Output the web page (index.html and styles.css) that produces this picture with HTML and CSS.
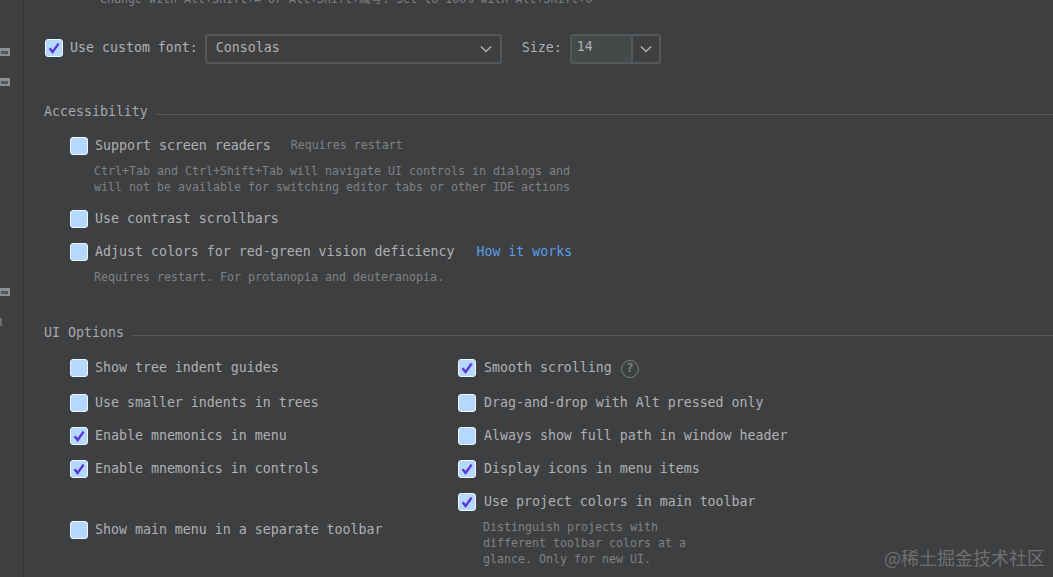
FILE: index.html
```html
<!DOCTYPE html>
<html lang="en">
<head>
<meta charset="utf-8">
<title>Appearance settings</title>
<link rel="stylesheet" href="styles.css">
</head>
<body>
<div class="page">
  <aside class="rail">
    <svg class="rail-icon first" viewBox="0 0 10 10"><path d="M0 1h10v8H0z" fill="#8c8f91"/><path d="M1 4h7v3H1z" fill="#55585a"/></svg>
    <svg class="rail-icon second" viewBox="0 0 10 10"><path d="M0 1h10v8H0z" fill="#8c8f91"/><path d="M1 4h7v3H1z" fill="#55585a"/></svg>
    <svg class="rail-icon third" viewBox="0 0 10 10"><path d="M0 1h10v8H0z" fill="#8c8f91"/><path d="M1 4h7v3H1z" fill="#55585a"/></svg>
    <span class="rail-mark"></span>
  </aside>
  <main class="content">
    <p class="top-hint">Change with Alt+Shift+= or Alt+Shift+减号. Set to 100% with Alt+Shift+0</p>

    <div class="font-row">
      <label class="check-row">
        <span class="box on"><svg viewBox="0 0 14 14"><path d="M2.6 7.2 5.6 11 11.6 2.6"/></svg></span>
        <span>Use custom font:</span>
      </label>
      <div class="combo font-combo"><span class="combo-text">Consolas</span><svg class="chev" viewBox="0 0 12 8"><path d="M1 1.5 6 6.5 11 1.5"/></svg></div>
      <span class="size-label">Size:</span>
      <div class="combo size-combo"><span class="size-value">14</span><span class="size-btn"><svg class="chev" viewBox="0 0 12 8"><path d="M1 1.5 6 6.5 11 1.5"/></svg></span></div>
    </div>

    <div class="heading access-heading"><span>Accessibility</span><i></i></div>
    <div class="group">
      <div class="check-row row-a1">
        <span class="box"></span><span>Support screen readers</span><span class="note restart">Requires restart</span>
      </div>
      <p class="note para-a1">Ctrl+Tab and Ctrl+Shift+Tab will navigate UI controls in dialogs and<br>will not be available for switching editor tabs or other IDE actions</p>
      <div class="check-row row-a2"><span class="box"></span><span>Use contrast scrollbars</span></div>
      <div class="check-row row-a3"><span class="box"></span><span>Adjust colors for red-green vision deficiency</span><a class="link">How it works</a></div>
      <p class="note para-a3">Requires restart. For protanopia and deuteranopia.</p>
    </div>

    <div class="heading ui-heading"><span>UI Options</span><i></i></div>
    <div class="options">
      <div class="col">
        <div class="check-row opt"><span class="box"></span><span>Show tree indent guides</span></div>
        <div class="check-row opt tight"><span class="box"></span><span>Use smaller indents in trees</span></div>
        <div class="check-row opt tight"><span class="box on"><svg viewBox="0 0 14 14"><path d="M2.6 7.2 5.6 11 11.6 2.6"/></svg></span><span>Enable mnemonics in menu</span></div>
        <div class="check-row opt tight"><span class="box on"><svg viewBox="0 0 14 14"><path d="M2.6 7.2 5.6 11 11.6 2.6"/></svg></span><span>Enable mnemonics in controls</span></div>
        <div class="check-row opt last"><span class="box"></span><span>Show main menu in a separate toolbar</span></div>
      </div>
      <div class="col right">
        <div class="check-row opt"><span class="box on"><svg viewBox="0 0 14 14"><path d="M2.6 7.2 5.6 11 11.6 2.6"/></svg></span><span>Smooth scrolling</span><span class="help">?</span></div>
        <div class="check-row opt tight"><span class="box"></span><span>Drag-and-drop with Alt pressed only</span></div>
        <div class="check-row opt tight"><span class="box"></span><span>Always show full path in window header</span></div>
        <div class="check-row opt tight"><span class="box on"><svg viewBox="0 0 14 14"><path d="M2.6 7.2 5.6 11 11.6 2.6"/></svg></span><span>Display icons in menu items</span></div>
        <div class="check-row opt tight"><span class="box on"><svg viewBox="0 0 14 14"><path d="M2.6 7.2 5.6 11 11.6 2.6"/></svg></span><span>Use project colors in main toolbar</span></div>
        <p class="note para-ui">Distinguish projects with<br>different toolbar colors at a<br>glance. Only for new UI.</p>
      </div>
    </div>
  </main>
</div>
<div class="watermark">@稀土掘金技术社区</div>
</body>
</html>
```
FILE: styles.css
```css
* { box-sizing: border-box; }
html, body { margin: 0; height: 100%; overflow: hidden; }
body {
  background: #3e3f41;
  color: #afb1b3;
  font-family: "DejaVu Sans Mono", "Noto Sans CJK SC", monospace;
  font-size: 13.28px;
}
.page { display: flex; height: 577px; overflow: hidden; }
.rail {
  width: 24px;
  flex: none;
  border-right: 1px solid #333537;
  display: flex;
  flex-direction: column;
  align-items: flex-start;
}
.rail-icon { display: block; width: 10px; height: 10px; }
.rail-icon.first { margin-top: 47px; }
.rail-icon.second { margin-top: 20px; }
.rail-icon.third { margin-top: 200px; }
.rail-mark { width: 2px; height: 8px; margin-top: 21px; background: #6a6c6e; }
.content { flex: 1; min-width: 0; }
p { margin: 0; }
.note { font-size: 11.63px; color: #7f8284; line-height: 16px; }
.top-hint {
  font-size: 11.63px;
  color: #7f8284;
  line-height: 16px;
  margin: -9px 0 0 76px;
  white-space: nowrap;
}
.font-row { display: flex; align-items: center; margin: 27px 0 0 21px; height: 30px; }
.check-row { display: flex; align-items: center; white-space: nowrap; }
.check-row > span:not(.box), .link { padding-bottom: 2px; }
.font-row .check-row > span:not(.box), .size-label, .combo-text { padding-bottom: 4px; }
.box {
  width: 18px;
  height: 18px;
  flex: none;
  margin-right: 7px;
  background: #b4d8fe;
  border: 1px solid #eef6ff;
  border-radius: 3px;
  display: flex;
  align-items: center;
  justify-content: center;
}
.font-row .box { margin-top: -2px; }
.box svg { width: 14px; height: 14px; }
.box path { fill: none; stroke: #5a36d8; stroke-width: 2.4; }
.combo {
  height: 30px;
  border: 2px solid #55585a;
  border-radius: 3px;
  display: flex;
  align-items: center;
}
.font-combo {
  width: 297px;
  margin-left: 7px;
  padding: 0 8px 0 9px;
  justify-content: space-between;
}
.chev { width: 12px; height: 8px; flex: none; }
.chev path { fill: none; stroke: #afb1b3; stroke-width: 1.4; }
.size-label { margin: 0 8px 0 20px; }
.size-combo { width: 91px; padding: 0; }
.size-value {
  width: 61px;
  height: 100%;
  padding: 0 5px 5px;
  display: flex;
  align-items: center;
  background: #45494a;
  border-right: 2px solid #55585a;
}
.size-btn { flex: 1; display: flex; justify-content: center; }
.heading { display: flex; align-items: center; margin-left: 20px; line-height: 16px; color: #a6a8aa; }
.heading i { flex: 1; height: 1px; background: #55585a; margin: 5px 0 0 8px; }
.access-heading { margin-top: 40px; }
.group { margin-left: 46px; }
.row-a1 { margin-top: 17px; height: 18px; }
.row-a1 .restart { margin-left: 20px; }
.para-a1 { margin: 8px 0 0 24px; }
.row-a2 { margin-top: 15px; height: 18px; }
.row-a3 { margin-top: 15px; height: 18px; }
.link { color: #5a9de8; margin-left: 22px; }
.para-a3 { margin: 8px 0 0 24px; }
.ui-heading { margin-top: 40px; }
.options { display: grid; grid-template-columns: 388px 1fr; margin: 18px 0 0 46px; }
.col { display: flex; flex-direction: column; align-items: flex-start; }
.opt { height: 18px; margin-bottom: 17px; }
.opt.tight { margin-bottom: 15px; }
.opt.last { margin-top: 28px; }
.right .box { margin-right: 8px; }
.check-row > .help {
  width: 18px;
  height: 18px;
  margin-left: 9px;
  margin-top: 1px;
  padding: 0;
  border: 1.5px solid #76817c;
  border-radius: 50%;
  color: #76817c;
  font-size: 13px;
  font-weight: bold;
  display: flex;
  align-items: center;
  justify-content: center;
}
.para-ui { margin: -7px 0 0 25px; }
.watermark {
  position: absolute;
  right: 8px;
  bottom: 8px;
  color: #6e7072;
  font-family: "Noto Sans CJK SC", sans-serif;
  font-size: 18px;
  line-height: 24px;
  white-space: nowrap;
}
```
